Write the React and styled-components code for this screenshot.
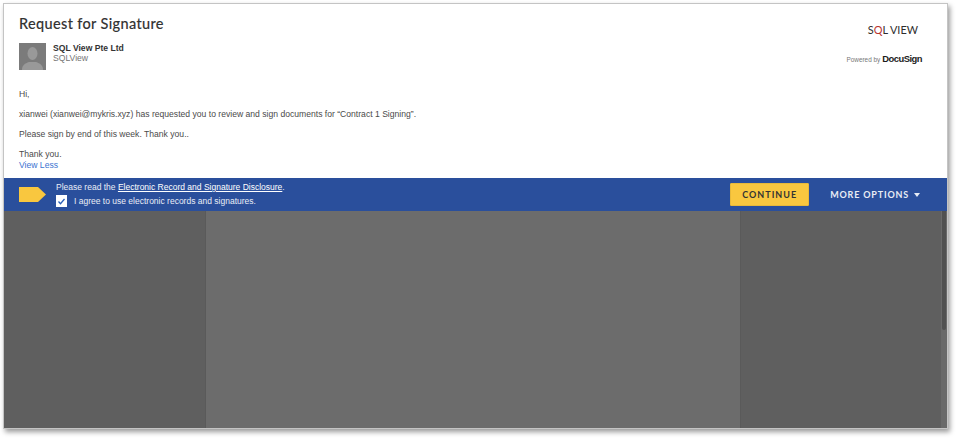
import React from "react";
import styled, { createGlobalStyle } from "styled-components";

const Global = createGlobalStyle`
  html, body { margin: 0; padding: 0; background: #fff; width: 957px; height: 438px; overflow: hidden; }
  body { font-family: "Liberation Sans", Arial, sans-serif; }
`;

const Page = styled.div`
  width: 957px;
  height: 438px;
  padding: 3px 9px 8px 3px;
  box-sizing: border-box;
`;

const Win = styled.div`
  height: 426px;
  display: flex;
  flex-direction: column;
  background: #fff;
  border: 1px solid #c4c4c4;
  box-sizing: border-box;
  box-shadow: 2px 3px 5px rgba(0, 0, 0, 0.4);
`;

const Header = styled.div`
  height: 174px;
  flex: none;
  display: flex;
  justify-content: space-between;
  padding: 11px 25px 0 15px;
  box-sizing: border-box;
`;

const Left = styled.div`
  display: flex;
  flex-direction: column;
`;

const Title = styled.h1`
  margin: 0;
  font: 500 14.5px/18px "Lato", sans-serif;
  letter-spacing: 0.35px;
  color: #333;
  -webkit-text-stroke: 0.1px #333;
`;

const Sender = styled.div`
  display: flex;
  gap: 7px;
  margin-top: 10px;
  height: 27px;
`;

const Avatar = styled.svg`
  width: 27px;
  height: 27px;
  display: block;
`;

const SenderText = styled.div`
  display: flex;
  flex-direction: column;
`;

const SenderName = styled.div`
  font: 700 8.6px/10px "Liberation Sans", sans-serif;
  color: #333;
`;

const SenderSub = styled.div`
  font: 400 8.6px/10px "Liberation Sans", sans-serif;
  color: #757575;
`;

const Message = styled.div`
  margin-top: 18.5px;
  font: 400 8.6px/11px "Liberation Sans", sans-serif;
  color: #4a4a4a;
`;

const Para = styled.p`
  margin: 0 0 9px;
`;

const ViewLess = styled.a`
  display: block;
  color: #3b73d1;
`;

const Brand = styled.div`
  display: flex;
  flex-direction: column;
  align-items: flex-end;
  padding-top: 7px;
`;

const Logo = styled.div`
  font: 400 10.9px/16px "Lato", sans-serif;
  color: #2d2d2d;
  margin-right: 4px;
`;

const LogoQ = styled.span`
  color: #b8342f;
`;

const LogoGap = styled.span`
  margin-left: 2px;
`;

const Powered = styled.div`
  display: flex;
  align-items: baseline;
  margin-top: 15px;
  font: 400 6.4px/12px "Liberation Sans", sans-serif;
  color: #777;
`;

const DocuSign = styled.span`
  margin-left: 2px;
  font: 700 9.4px/12px "Liberation Sans", sans-serif;
  letter-spacing: -0.5px;
  color: #1c1c1c;
`;

const Bar = styled.div`
  height: 33px;
  flex: none;
  display: flex;
  align-items: center;
  background: #2a4f9c;
  padding: 0 27px 0 15px;
  box-sizing: border-box;
`;

const Tag = styled.svg`
  width: 27px;
  height: 15px;
  flex: none;
  margin-right: 10px;
`;

const Notice = styled.div`
  flex: 1;
  display: flex;
  flex-direction: column;
  gap: 3px;
  font: 400 8.5px/10px "Liberation Sans", sans-serif;
  color: #e9edf6;
`;

const NoticeLink = styled.a`
  color: #fff;
  text-decoration: underline;
`;

const Agree = styled.div`
  display: flex;
  align-items: center;
  gap: 7px;
`;

const Check = styled.span`
  width: 11px;
  height: 12px;
  flex: none;
  display: flex;
  align-items: center;
  justify-content: center;
  background: #fff;
`;

const Continue = styled.button`
  width: 79px;
  height: 23px;
  padding: 0;
  margin-right: 21px;
  border: 1px solid #e8b93a;
  border-radius: 1px;
  background: #f9c73f;
  font: 700 9px/1 "Lato", sans-serif;
  letter-spacing: 1px;
  color: #333;
`;

const More = styled.div`
  display: flex;
  align-items: center;
  gap: 5px;
  font: 700 9px/1 "Lato", sans-serif;
  letter-spacing: 0.82px;
  color: #e8ecf5;
`;

const Caret = styled.span`
  width: 0;
  height: 0;
  border-left: 3px solid transparent;
  border-right: 3px solid transparent;
  border-top: 4px solid #e8ecf5;
`;

const Viewer = styled.div`
  flex: 1;
  min-height: 0;
  display: grid;
  grid-template-columns: 201px 536px 1fr;
  background: #5f5f5f;
`;

const SidePane = styled.div`
  background: #5f5f5f;
`;

const Sheet = styled.div`
  background: #6c6c6c;
  border-left: 1px solid #5a5a5a;
  border-right: 1px solid #5a5a5a;
`;

const RightPane = styled.div`
  display: flex;
  justify-content: flex-end;
  background: #5f5f5f;
`;

const Track = styled.div`
  width: 6px;
  background: #696969;
`;

const Thumb = styled.div`
  height: 119px;
  margin: 0 1px;
  border-radius: 0 0 2px 2px;
  background: #505050;
`;

export default function App() {
  return (
    <Page>
      <Global />
      <Win>
        <Header>
          <Left>
            <Title>Request for Signature</Title>
            <Sender>
              <Avatar viewBox="0 0 27 27">
                <rect width="27" height="27" fill="#7b7b7b" />
                <ellipse cx="13.5" cy="10.5" rx="5" ry="6.5" fill="#999" />
                <path d="M3 27c0-5 3-6.500 7-8h7c4 1.500 7 3 7 8z" fill="#999" />
              </Avatar>
              <SenderText>
                <SenderName>SQL View Pte Ltd</SenderName>
                <SenderSub>SQLView</SenderSub>
              </SenderText>
            </Sender>
            <Message>
              <Para>Hi,</Para>
              <Para>xianwei (xianwei@mykris.xyz) has requested you to review and sign documents for “Contract 1 Signing”.</Para>
              <Para>Please sign by end of this week. Thank you..</Para>
              <div>Thank you.</div>
              <ViewLess>View Less</ViewLess>
            </Message>
          </Left>
          <Brand>
            <Logo>S<LogoQ>Q</LogoQ>L<LogoGap>VIEW</LogoGap></Logo>
            <Powered>Powered by<DocuSign>DocuSign</DocuSign></Powered>
          </Brand>
        </Header>
        <Bar>
          <Tag viewBox="0 0 27 15">
            <path d="M0 0h19l8 7.500-8 7.500H0z" fill="#f9c73f" />
          </Tag>
          <Notice>
            <div>Please read the <NoticeLink>Electronic Record and Signature Disclosure</NoticeLink>.</div>
            <Agree>
              <Check>
                <svg width="9" height="9" viewBox="0 0 9 9">
                  <path d="M1.500 4.500l2 2.200 4-4.700" fill="none" stroke="#2a5fb8" strokeWidth="1.300" />
                </svg>
              </Check>
              I agree to use electronic records and signatures.
            </Agree>
          </Notice>
          <Continue>CONTINUE</Continue>
          <More>MORE OPTIONS<Caret /></More>
        </Bar>
        <Viewer>
          <SidePane />
          <Sheet />
          <RightPane>
            <Track><Thumb /></Track>
          </RightPane>
        </Viewer>
      </Win>
    </Page>
  );
}
